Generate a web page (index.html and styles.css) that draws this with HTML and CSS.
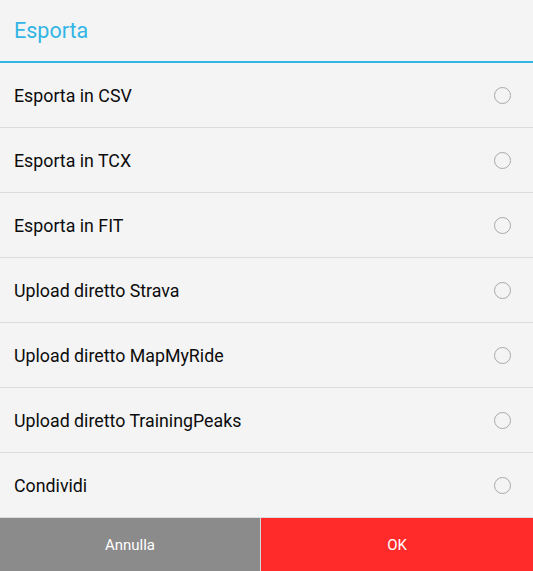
FILE: index.html
```html
<!DOCTYPE html>
<html lang="it">
<head>
  <meta charset="UTF-8" />
  <meta name="viewport" content="width=device-width, initial-scale=1.0"/>
  <title>Esporta</title>
  <link rel="stylesheet" href="styles.css">
</head>
<body>
  <div class="dialog">
    <h2 class="title">Esporta</h2>
    <ul class="options">
      <li class="option"><span>Esporta in CSV</span><span class="radio"></span></li>
      <li class="option"><span>Esporta in TCX</span><span class="radio"></span></li>
      <li class="option"><span>Esporta in FIT</span><span class="radio"></span></li>
      <li class="option"><span>Upload diretto Strava</span><span class="radio"></span></li>
      <li class="option"><span>Upload diretto MapMyRide</span><span class="radio"></span></li>
      <li class="option"><span>Upload diretto TrainingPeaks</span><span class="radio"></span></li>
      <li class="option"><span>Condividi</span><span class="radio"></span></li>
    </ul>
    <div class="buttons">
      <button class="btn cancel">Annulla</button>
      <button class="btn ok">OK</button>
    </div>
  </div>
</body>
</html>
```

FILE: styles.css
```css
body {
  margin: 0;
  padding: 0;
  font-family: Roboto, 'Noto Sans', sans-serif;
  background-color: #f4f4f4;
}

.dialog {
  width: 533px;
  height: 571px;
  display: flex;
  flex-direction: column;
  background-color: #f4f4f4;
}

.title {
  margin: 0;
  height: 61px;
  display: flex;
  align-items: center;
  padding-left: 14px;
  font-size: 21.5px;
  font-weight: normal;
  color: #33b5e5;
  border-bottom: 2px solid #33b5e5;
  box-sizing: content-box;
}

.options {
  list-style: none;
  margin: 0;
  padding: 0;
}

.option {
  height: 64px;
  display: flex;
  align-items: center;
  justify-content: space-between;
  padding: 0 22px 0 14px;
  font-size: 17.8px;
  color: #0c0c0c;
  border-bottom: 1px solid #dcdcdc;
}

.radio {
  width: 15px;
  height: 15px;
  border: 1.5px solid #a8a8a8;
  border-radius: 50%;
}

.buttons {
  flex: 1;
  display: flex;
}

.btn {
  border: none;
  color: #fff;
  font-family: Roboto, 'Noto Sans', sans-serif;
  font-size: 15px;
  cursor: pointer;
}

.cancel {
  width: 261px;
  background-color: #8b8b8b;
  border-right: 1px solid #d8d8d8;
}

.ok {
  flex: 1;
  background-color: #ff2b2b;
}
```
